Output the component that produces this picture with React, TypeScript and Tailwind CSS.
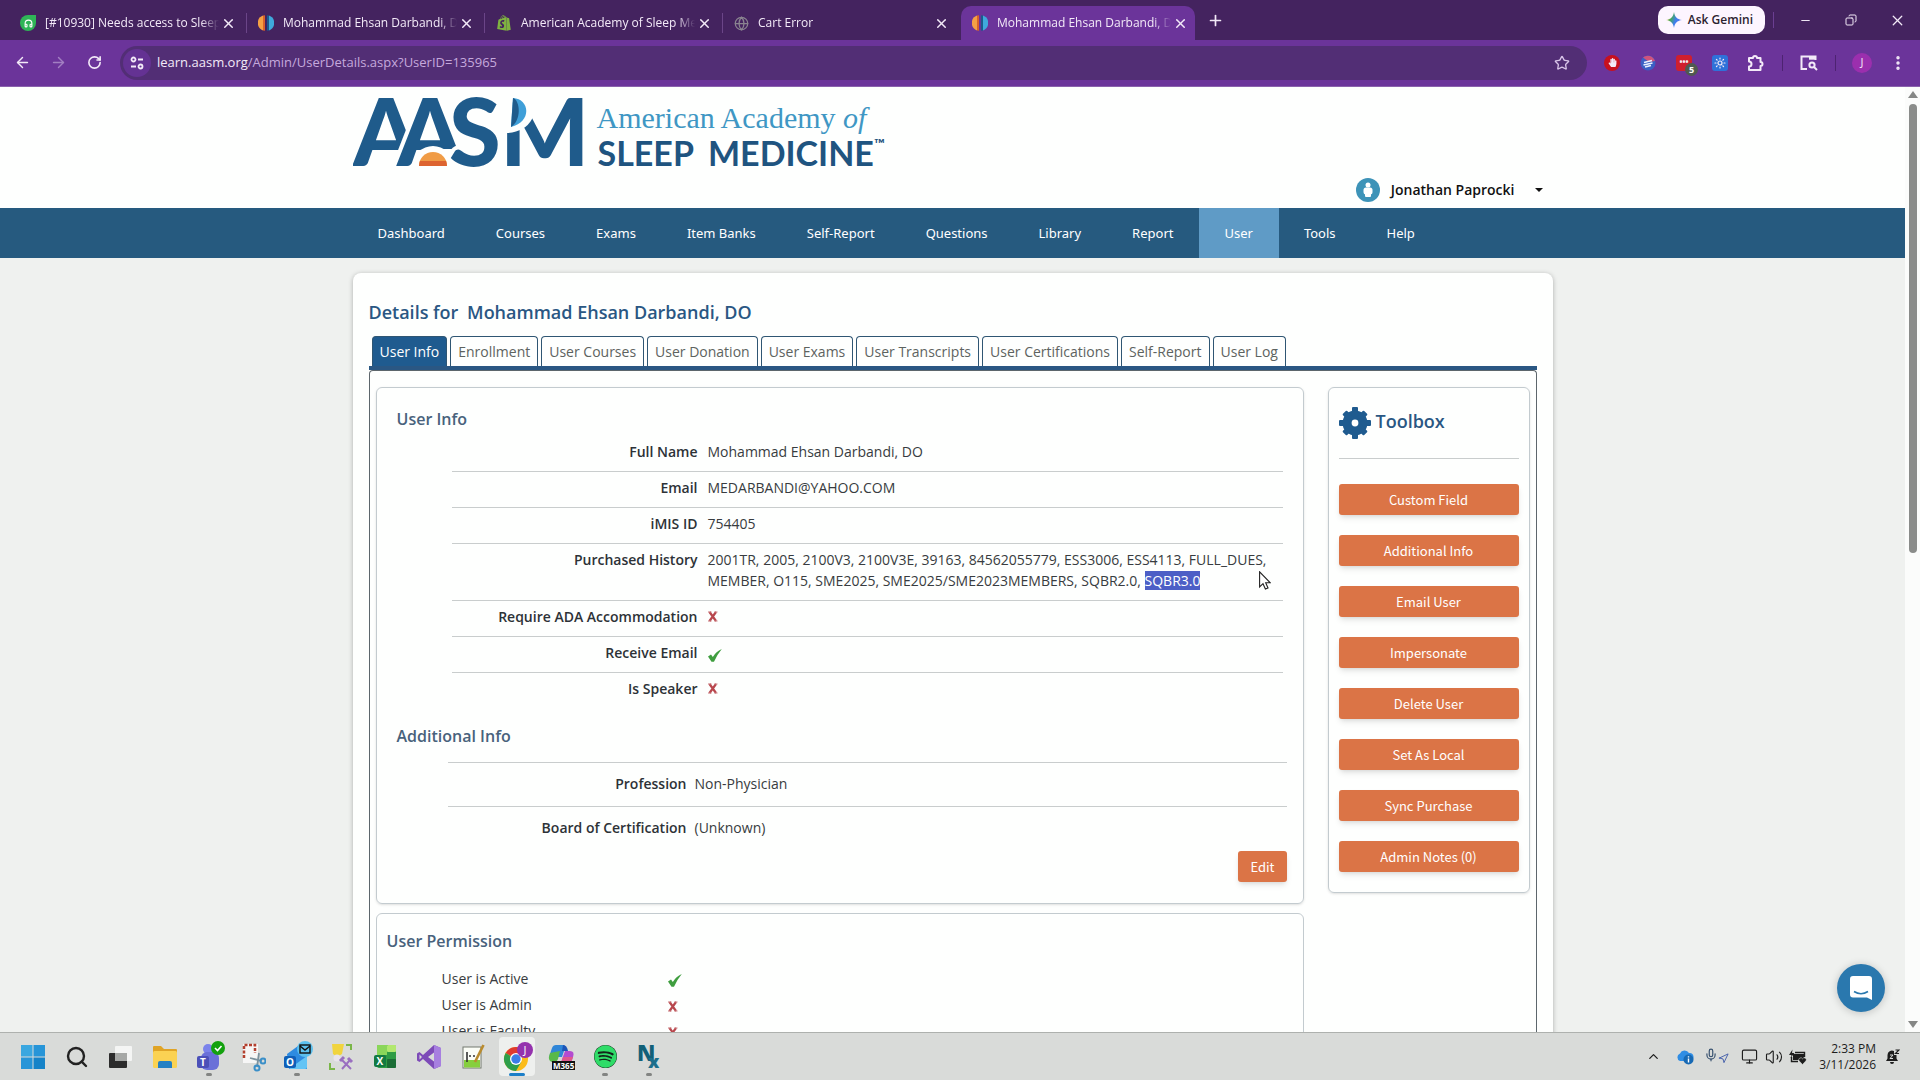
import React from "react";
import {
    ArrowLeft,
    ArrowRight,
    ChevronUp,
    Copy,
    EllipsisVertical,
    Globe,
    Headphones,
    Mic,
    Minus,
    Monitor,
    Navigation,
    Plus,
    RotateCw,
    Search,
    Star,
    Sun,
    Volume2,
    X,
} from "lucide-react";
import { FaHandPaper, FaShopify, FaSpotify } from "react-icons/fa";
import clsx from "clsx";

const browserTabs = [
    { title: "[#10930] Needs access to Sleep", icon: "support" },
    { title: "Mohammad Ehsan Darbandi, DO", icon: "aasm" },
    { title: "American Academy of Sleep Medicine", icon: "shop" },
    { title: "Cart Error", icon: "globe" },
    { title: "Mohammad Ehsan Darbandi, DO", icon: "aasm", active: true },
];

const navItems = [
    "Dashboard",
    "Courses",
    "Exams",
    "Item Banks",
    "Self-Report",
    "Questions",
    "Library",
    "Report",
    "User",
    "Tools",
    "Help",
];

const detailTabs = [
    "User Info",
    "Enrollment",
    "User Courses",
    "User Donation",
    "User Exams",
    "User Transcripts",
    "User Certifications",
    "Self-Report",
    "User Log",
];

const tools = [
    "Custom Field",
    "Additional Info",
    "Email User",
    "Impersonate",
    "Delete User",
    "Set As Local",
    "Sync Purchase",
    "Admin Notes (0)",
];

const permissions = [
    { name: "User is Active", on: true },
    { name: "User is Admin", on: false },
    { name: "User is Faculty", on: false },
];

function Favicon({ icon }: { icon: string }) {
    if (icon === "support")
        return (
            <span className="grid size-4 shrink-0 place-items-center rounded-full rounded-tr-sm bg-[#2fb457] text-white">
                <Headphones size={9} strokeWidth={3} />
            </span>
        );
    if (icon === "shop") return <FaShopify size={16} className="shrink-0 text-[#7fb241]" />;
    if (icon === "globe") return <Globe size={15} className="shrink-0 text-[#8a8490]" />;
    return (
        <svg viewBox="0 0 16 16" className="size-4 shrink-0">
            <path d="M5 0.5 A8 8 0 0 0 5 15.5 Z" fill="#f5a044" />
            <path d="M5 0.5 L7 0.2 V15.8 L5 15.5 Z" fill="#d9622b" />
            <path d="M9 0.2 L11 0.5 V15.5 L9 15.8 Z" fill="#1c5a8c" />
            <path d="M11 0.5 A8 8 0 0 1 11 15.5 Z" fill="#3fa9dc" />
        </svg>
    );
}

function TabStrip() {
    return (
        <div className="flex h-10 items-end bg-[#44235f] pl-[9px] text-[#f3eaf8]">
            {browserTabs.map((tab, index) => (
                <div
                    key={index}
                    className={clsx(
                        "flex h-[34px] items-center pl-[11px]",
                        tab.active ? "w-[234px] rounded-t-[10px] bg-[#6b349a]" : "w-[238px]"
                    )}>
                    <Favicon icon={tab.icon} />
                    <span className="ml-[9px] w-[174px] overflow-hidden text-[12px] whitespace-nowrap [mask-image:linear-gradient(to_right,black_156px,transparent_174px)]">
                        {tab.title}
                    </span>
                    <button aria-label="Close tab" className="grid w-[18px] place-items-center">
                        <X size={15} strokeWidth={2.4} />
                    </button>
                    {!tab.active && index < 3 && <span className="ml-auto h-5 w-px shrink-0 bg-[#6b4588]" />}
                </div>
            ))}
            <button aria-label="New tab" className="mb-[11px] ml-3">
                <Plus size={17} strokeWidth={2.4} />
            </button>
            <div className="ml-auto flex h-10 items-center">
                <button className="flex h-7 items-center gap-[6px] rounded-[10px] bg-[#fdf5ff] pr-3 pl-2 text-[12px] font-semibold text-[#2b2330]">
                    <svg viewBox="0 0 16 16" className="size-4">
                        <defs>
                            <linearGradient id="gem" x1="0" y1="0.3" x2="1" y2="0.7">
                                <stop offset="0" stopColor="#f6b93b" />
                                <stop offset="0.3" stopColor="#45a85c" />
                                <stop offset="0.6" stopColor="#3f7df0" />
                                <stop offset="1" stopColor="#5b79e6" />
                            </linearGradient>
                        </defs>
                        <path d="M8 0 C8.8 5 11 7.2 16 8 C11 8.8 8.8 11 8 16 C7.2 11 5 8.8 0 8 C5 7.2 7.2 5 8 0Z" fill="url(#gem)" />
                    </svg>
                    Ask Gemini
                </button>
                <span className="ml-2 h-4 w-px bg-[#6b3f92]" />
                <button aria-label="Minimize" className="ml-2 grid w-[46px] place-items-center">
                    <Minus size={13} strokeWidth={1.8} />
                </button>
                <button aria-label="Restore" className="grid w-[46px] place-items-center">
                    <Copy size={12} strokeWidth={2} className="-scale-x-100" />
                </button>
                <button aria-label="Close" className="grid w-[46px] place-items-center">
                    <X size={17} strokeWidth={1.8} />
                </button>
            </div>
        </div>
    );
}

function Toolbar() {
    return (
        <div className="flex h-[47px] items-center border-b border-[#8a62ac] bg-[#6b349a] pb-px pl-1 text-[#f3eaf8]">
            <button aria-label="Back" className="grid w-9 place-items-center">
                <ArrowLeft size={17} />
            </button>
            <button aria-label="Forward" className="grid w-9 place-items-center text-[#a27fc2]">
                <ArrowRight size={17} />
            </button>
            <button aria-label="Reload" className="grid w-9 place-items-center">
                <RotateCw size={15} strokeWidth={2.6} />
            </button>
            <div className="ml-2 flex h-[34px] flex-1 items-center rounded-full bg-[#522e75] pr-[17px] pl-[3px]">
                <button aria-label="Site information" className="grid size-7 place-items-center rounded-full bg-[#643293]">
                    <svg viewBox="0 0 14 14" fill="none" stroke="currentColor" strokeWidth="1.8" className="size-[14px]">
                        <circle cx="3.5" cy="3.5" r="2" />
                        <path d="M8 3.5 H13 M1 10.5 H6" />
                        <circle cx="10.5" cy="10.5" r="2" />
                    </svg>
                </button>
                <span className="ml-[6px] text-[13px]">
                    learn.aasm.org
                    <span className="text-[#c5a9dc]">/Admin/UserDetails.aspx?UserID=135965</span>
                </span>
                <button aria-label="Bookmark" className="ml-auto">
                    <Star size={16} className="text-[#d8c4e8]" />
                </button>
            </div>
            <div className="ml-[7px] flex items-center">
                <button aria-label="Ad blocker" className="grid w-9 place-items-center">
                    <span className="grid size-4 place-items-center rounded-full bg-[#c8101e]">
                        <FaHandPaper size={9} />
                    </span>
                </button>
                <button aria-label="Translate" className="grid w-9 place-items-center">
                    <svg viewBox="0 0 16 16" className="size-4">
                        <circle cx="8" cy="8" r="7.5" fill="#3b5fc4" />
                        <path d="M3 2.5 A7.5 7.5 0 0 1 15 6 L9 7 Z" fill="#d0527c" />
                        <path d="M4 7.5 L12 5.5 M3.5 10 L12.5 8 M5 12 L11 10.5" stroke="#e9f1ff" strokeWidth="1.6" />
                    </svg>
                </button>
                <button aria-label="Passwords" className="relative grid w-9 place-items-center">
                    <span className="size-4 rounded-[3px] bg-[#cf1f2e] text-center text-[8px] leading-[14px] font-bold">•••</span>
                    <span className="absolute top-[8px] left-[19px] grid h-[13px] w-[13px] place-items-center rounded-full bg-[#4f5a50] text-[9px] leading-none font-bold text-white">
                        5
                    </span>
                </button>
                <button aria-label="Assistant" className="grid w-9 place-items-center">
                    <span className="grid size-4 place-items-center rounded-[3px] bg-[#2f72d9]">
                        <Sun size={12} strokeWidth={2.4} />
                    </span>
                </button>
                <button aria-label="Extensions" className="grid w-9 place-items-center">
                    <svg viewBox="0 0 18 18" fill="none" stroke="currentColor" strokeWidth="2" strokeLinejoin="round" className="size-[18px]">
                        <path d="M2 4 H6 A2 2 0 0 1 10 4 H13.5 V8 A2 2 0 0 1 13.5 12 V16 H2 V12.5 A2.5 2.5 0 0 0 2 7.5Z" />
                    </svg>
                </button>
                <span className="mx-2 h-4 w-px bg-[#4d2371]" />
                <button aria-label="Search tabs" className="grid w-9 place-items-center">
                    <svg viewBox="0 0 18 16" fill="none" stroke="currentColor" strokeWidth="2" className="h-4 w-[18px]">
                        <path d="M7 14 H1.5 V1.5 H15.5 V5" />
                        <path d="M9 3 H16" strokeWidth="3.4" />
                        <circle cx="12" cy="10" r="2.6" />
                        <path d="M14 12 L17 15" />
                    </svg>
                </button>
                <span className="mx-2 h-4 w-px bg-[#4d2371]" />
                <button aria-label="Profile" className="grid w-9 place-items-center">
                    <span className="grid size-5 place-items-center rounded-full bg-[#9b2fae] text-[11px]">J</span>
                </button>
                <button aria-label="Menu" className="grid w-9 place-items-center">
                    <EllipsisVertical size={18} strokeWidth={2.6} />
                </button>
            </div>
            <span className="w-1" />
        </div>
    );
}

function Logo() {
    return (
        <a href="#home" aria-label="American Academy of Sleep Medicine" className="flex">
            <svg viewBox="0 0 244 74" className="h-[74px] w-[244px] font-['Lato',sans-serif]">
                <g
                    fill="#1f5b8b"
                    stroke="#fefffe"
                    strokeWidth="8"
                    strokeLinejoin="round"
                    fontSize="94"
                    fontWeight="900"
                    style={{ paintOrder: "stroke" }}>
                    <text x="0" y="70">A</text>
                    <text x="44" y="70">A</text>
                    <circle cx="80" cy="70" r="20" fill="#fefffe" stroke="none" />
                    <rect x="82" y="53" width="30" height="20" fill="#fefffe" stroke="none" />
                    <text x="96" y="70">S</text>
                    <text x="147" y="70">M</text>
                </g>
                <path d="M66 70 A14 14 0 0 1 94 70 Z" fill="#f09c46" />
                <path d="M66 70 A14 14 0 0 1 67 65 H93 A14 14 0 0 1 94 70 Z" fill="#dd6430" />
                <path d="M154 0 H188 L179 23 Q172 36 154 37 Z" fill="#fefffe" />
                <path d="M160 2 C177 3 179 26 158 31 Z" fill="#3f9fd8" />
                <path d="M160 2 C167 4 169 24 158 31 Z" fill="#1f5b8b" />
            </svg>
            <div className="pt-[6px] whitespace-nowrap">
                <div className="font-['Liberation_Serif',serif] text-[30px] leading-[32px] text-[#3f97c4]">
                    American Academy <i>of</i>
                </div>
                <div className="flex font-['Lato',sans-serif] text-[34px] leading-[38px] font-bold text-[#1f5480]">
                    <span className="mr-[14px] ml-px">SLEEP</span>
                    <span>MEDICINE</span>
                    <span className="text-[14px] leading-[20px]">™</span>
                </div>
            </div>
        </a>
    );
}

function SiteHeader() {
    return (
        <header>
            <div className="bg-[#fefffe]">
                <div className="mx-auto flex max-w-[1200px] justify-between pt-[9px]">
                    <div className="pb-[36px]">
                        <Logo />
                    </div>
                    <button className="mr-[10px] mb-[5px] flex items-center self-end text-[14px] leading-[26px] font-semibold text-[#111]">
                        <svg viewBox="0 0 24 24" className="mr-[11px] size-6">
                            <circle cx="12" cy="12" r="12" fill="#3d93b8" />
                            <circle cx="12" cy="7" r="2.5" fill="white" />
                            <rect x="7.5" y="9.5" width="9" height="7" rx="2.5" fill="white" />
                            <rect x="9" y="12" width="6" height="7" rx="1" fill="white" />
                        </svg>
                        Jonathan Paprocki
                        <span className="ml-5 border-x-4 border-t-4 border-x-transparent border-t-[#111]" />
                    </button>
                </div>
            </div>
            <nav className="bg-[#265a7f]">
                <div className="mx-auto flex max-w-[1200px]">
                    {navItems.map((item) => (
                        <a
                            key={item}
                            href="#nav"
                            className={clsx(
                                "pr-[26px] pl-[25px] font-['Noto_Sans',sans-serif] text-[13px] leading-[50px] text-white",
                                item === "User" && "bg-[#5f9bc6]"
                            )}>
                            {item}
                        </a>
                    ))}
                </div>
            </nav>
        </header>
    );
}

function Cross() {
    return (
        <svg viewBox="0 0 10 11" role="img" aria-label="No" className="h-[11px] w-[10px]">
            <path d="M1.5 1 L8 10 M8 1 L1.5 10" stroke="#b8474d" strokeWidth="2.2" />
            <path d="M0 1 H3.5 M6.5 1 H9.5 M0 10 H3.5 M6.5 10 H9.5" stroke="#c9787c" strokeWidth="1.2" />
        </svg>
    );
}

function Tick() {
    return (
        <svg viewBox="0 0 14 13" role="img" aria-label="Yes" className="h-[13px] w-[14px]">
            <path d="M0 7.5 L3 5.5 L4.8 8 Q8 2.5 13.8 0 Q8.5 6.5 6 12.8 L3.5 12.8 Z" fill="#3f9e3f" />
        </svg>
    );
}

function Row({ label, children }: { label: string; children: React.ReactNode }) {
    return (
        <div className="flex gap-[10px] border-b border-[#c9cdcd] pt-[5px] pb-[9px] text-[14px] leading-[21px] last:border-b-0">
            <dt className="w-[246px] shrink-0 text-right font-semibold text-[#2d3237]">{label}</dt>
            <dd className="relative flex-1 text-[#383c40]">{children}</dd>
        </div>
    );
}

function ExtraRow({ label, value }: { label: string; value: string }) {
    return (
        <div className="flex gap-2 border-t border-[#c9cdcd] pt-[10px] pb-3 text-[14px] leading-[21px]">
            <dt className="w-[239px] shrink-0 text-right font-semibold text-[#2d3237]">{label}</dt>
            <dd className="text-[#383c40]">{value}</dd>
        </div>
    );
}

function UserInfo() {
    return (
        <section className="rounded-md border border-[#c3cbcf] pr-4 pb-[21px] pl-5 shadow-sm">
            <h2 className="mt-[17px] mb-[3px] text-[16px] leading-7 font-semibold text-[#48627c]">User Info</h2>
            <dl className="mr-1 ml-[55px]">
                <Row label="Full Name">Mohammad Ehsan Darbandi, DO</Row>
                <Row label="Email">MEDARBANDI@YAHOO.COM</Row>
                <Row label="iMIS ID">754405</Row>
                <Row label="Purchased History">
                    2001TR, 2005, 2100V3, 2100V3E, 39163, 84562055779, ESS3006, ESS4113, FULL_DUES,
                    <br />
                    MEMBER, O115, SME2025, SME2025/SME2023MEMBERS, SQBR2.0,{" "}
                    <mark className="bg-[#4c5fc6] text-white">SQBR3.0</mark>
                    <svg viewBox="0 0 12 19" className="absolute top-[22px] right-3 h-[19px] w-3">
                        <path
                            d="M0.6 0.8 V16 L4 12.7 L6.4 18 L9 16.9 L6.7 11.8 H11.3 Z"
                            fill="white"
                            stroke="#222"
                            strokeWidth="1.1"
                        />
                    </svg>
                </Row>
                <Row label="Require ADA Accommodation">
                    <span className="flex h-[21px] items-center"><Cross /></span>
                </Row>
                <Row label="Receive Email">
                    <span className="flex h-[21px] items-end pb-px"><Tick /></span>
                </Row>
                <Row label="Is Speaker">
                    <span className="flex h-[21px] items-center"><Cross /></span>
                </Row>
            </dl>
            <h2 className="mt-[14px] mb-3 text-[16px] leading-7 font-semibold text-[#48627c]">Additional Info</h2>
            <dl className="ml-[51px]">
                <ExtraRow label="Profession" value="Non-Physician" />
                <ExtraRow label="Board of Certification" value="(Unknown)" />
            </dl>
            <div className="mt-px flex justify-end">
                <button className="rounded-[3px] bg-[#db7446] px-3 font-['Noto_Sans_CJK_SC',sans-serif] text-[13px] leading-[31px] text-white shadow-md">
                    Edit
                </button>
            </div>
        </section>
    );
}

function UserPermission() {
    return (
        <section className="mt-[9px] rounded-t-md border border-[#c3cbcf] px-[10px] pb-10">
            <h2 className="mt-[13px] text-[16px] leading-7 font-semibold text-[#48627c]">User Permission</h2>
            <dl className="mt-[11px] ml-[55px]">
                {permissions.map((item) => (
                    <div key={item.name} className="flex text-[14px] leading-[26px] text-[#383c40]">
                        <dt className="w-[226px]">{item.name}</dt>
                        <dd className="flex items-center pt-[2px]">{item.on ? <Tick /> : <Cross />}</dd>
                    </div>
                ))}
            </dl>
        </section>
    );
}

function Toolbox() {
    return (
        <aside className="w-[202px] self-start rounded-md border border-[#c3cbcf] px-[10px] pb-5 shadow-sm">
            <h2 className="flex items-center gap-[5px] border-b border-[#c9cdcd] pt-[19px] pb-[19px] text-[18px] leading-7 font-semibold text-[#2a5783]">
                <svg viewBox="0 0 32 32" className="size-8">
                    <g fill="#1f5b8f">
                        <circle cx="16" cy="16" r="12.5" />
                        <rect x="13" y="0" width="6" height="32" rx="1" />
                        <rect x="0" y="13" width="32" height="6" rx="1" />
                        <rect x="13" y="1" width="6" height="30" rx="1" transform="rotate(45 16 16)" />
                        <rect x="13" y="1" width="6" height="30" rx="1" transform="rotate(-45 16 16)" />
                    </g>
                    <circle cx="16" cy="16" r="3.4" fill="white" />
                </svg>
                <span className="pb-1">Toolbox</span>
            </h2>
            <div className="mt-[25px] grid gap-5">
                {tools.map((tool) => (
                    <button
                        key={tool}
                        className="w-full rounded-[3px] bg-[#db7446] font-['Noto_Sans_CJK_SC',sans-serif] text-[13px] leading-[31px] text-white shadow-md">
                        {tool}
                    </button>
                ))}
            </div>
        </aside>
    );
}

function UserDetails() {
    return (
        <main className="mx-auto mt-[15px] max-w-[1200px] rounded-lg bg-[#fefffe] px-4 shadow-[0_1px_5px_rgba(0,0,0,0.28)]">
            <h1 className="pt-[25px] text-[18px] leading-7 font-semibold text-[#2a5783]">
                Details for <span className="ml-1">Mohammad Ehsan Darbandi, DO</span>
            </h1>
            <div className="mt-[10px] flex gap-[3px] border-b-4 border-[#2a5783] pl-[3px]">
                {detailTabs.map((tab, index) => (
                    <button
                        key={tab}
                        className={clsx(
                            "rounded-t-[4px] border border-b-0 border-[#2f5673] px-[7px] text-[14px] leading-[29px]",
                            index === 0 ? "bg-[#1f5b8f] text-white" : "text-[#5d635f]"
                        )}>
                        {tab}
                    </button>
                ))}
            </div>
            <div className="flex gap-6 rounded-t-[4px] border border-b-0 border-[#5d666c] px-[6px] pt-4">
                <div className="flex-1">
                    <UserInfo />
                    <UserPermission />
                </div>
                <Toolbox />
            </div>
        </main>
    );
}

function TeamsIcon() {
    return (
        <svg viewBox="0 0 32 32" className="size-8">
            <circle cx="15" cy="8" r="5" fill="#7b83eb" />
            <rect x="8" y="11" width="18" height="18" rx="6" fill="#6a70d8" />
            <rect x="4" y="15" width="12" height="12" rx="2" fill="#4b50b8" />
            <text x="7" y="25" fontSize="10" fontWeight="700" fill="white">T</text>
            <circle cx="25" cy="7" r="7" fill="#13a10e" />
            <path d="M22 7 L24.5 9.5 L28.5 5" stroke="white" strokeWidth="1.6" fill="none" />
        </svg>
    );
}

const taskbarApps: { name: string; running?: boolean; active?: boolean; icon: React.ReactNode }[] = [
    {
        name: "Start",
        icon: (
            <svg viewBox="0 0 24 24" className="size-6" fill="#1683c8">
                <path d="M0 0H11.5V11.5H0Z" fill="#3aa7e0" />
                <path d="M12.5 0H24V11.5H12.5ZM0 12.5H11.5V24H0Z" fill="#2795d8" />
                <path d="M12.5 12.5H24V24H12.5Z" />
            </svg>
        ),
    },
    { name: "Search", icon: <Search size={24} strokeWidth={2.4} className="text-[#222]" /> },
    {
        name: "Task view",
        icon: (
            <svg viewBox="0 0 24 24" className="size-6">
                <rect x="6" y="1" width="17" height="15" rx="1" fill="#f4f5f4" />
                <rect x="0" y="8" width="18" height="15" rx="1" fill="#2c2c2c" />
                <rect x="6" y="8" width="12" height="8" fill="#a6a8a6" />
            </svg>
        ),
    },
    {
        name: "File Explorer",
        icon: (
            <svg viewBox="0 0 26 24" className="h-6 w-[26px]">
                <path d="M1 2 Q1 1 2 1 H9 L12 4 H24 Q25 4 25 5 V22 H1Z" fill="#e0a426" />
                <rect x="1" y="6" width="24" height="17" rx="1.5" fill="#fbd253" />
                <path d="M6 23 V18 Q6 16 8 16 H18 Q20 16 20 18 V23Z" fill="#2581c4" />
            </svg>
        ),
    },
    { name: "Teams", running: true, icon: <TeamsIcon /> },
    {
        name: "Snipping Tool",
        icon: (
            <svg viewBox="0 0 26 32" className="h-8 w-[26px]">
                <rect x="3" y="3" width="15" height="19" fill="#f6f6f6" />
                <path d="M4 17 V4 H15 V12" fill="none" stroke="#b3402f" strokeWidth="2.5" strokeDasharray="3 1.5" />
                <path d="M10 17 L22 20 M17 26 L19 12" stroke="#7d929e" strokeWidth="1.8" />
                <circle cx="23" cy="20" r="2.5" fill="none" stroke="#3a8fc8" strokeWidth="2" />
                <circle cx="17" cy="27" r="2.5" fill="none" stroke="#3a8fc8" strokeWidth="2" />
            </svg>
        ),
    },
    {
        name: "Outlook",
        running: true,
        icon: (
            <svg viewBox="0 0 32 32" className="size-8">
                <path d="M6 13 L17 5 L26 13 V28 H8Z" fill="#2e8be0" />
                <path d="M8 28 L26 15 V26 Q26 28 24 28Z" fill="#64c4f5" />
                <rect x="3" y="15" width="12" height="12" rx="2" fill="#0f5fb8" />
                <text x="5" y="25" fontSize="10" fontWeight="700" fill="white">O</text>
                <circle cx="24" cy="8" r="8" fill="#5cc0ee" />
                <rect x="19" y="4" width="10" height="8" fill="none" stroke="#111" strokeWidth="1.4" />
                <path d="M19 5 L24 9 L29 5" fill="none" stroke="#111" strokeWidth="1.4" />
            </svg>
        ),
    },
    {
        name: "Config Tools",
        icon: (
            <svg viewBox="0 0 26 32" className="h-8 w-[26px]">
                <path d="M4 3 H16 L14 13 Q9 17 5 13Z" fill="#f1d43f" />
                <path d="M18 4 H23 V9 M2 22 V28 H7" stroke="#7ab648" strokeWidth="2" fill="none" />
                <circle cx="9" cy="17" r="3.5" fill="#e9e4ec" />
                <path d="M14 19 L23 28 M22 19 L14 28" stroke="#9a6fc0" strokeWidth="2" />
                <path d="M12 20 L16 16 M20 17 L24 21" stroke="#9a6fc0" strokeWidth="3" />
            </svg>
        ),
    },
    {
        name: "Excel",
        icon: (
            <svg viewBox="0 0 24 26" className="h-[26px] w-6">
                <rect x="4" y="1" width="19" height="23" rx="2" fill="#2f9c45" />
                <rect x="4" y="1" width="10" height="10" fill="#8ad65a" />
                <rect x="14" y="1" width="9" height="7" rx="1" fill="#b2e86f" />
                <rect x="14" y="15" width="9" height="9" rx="1" fill="#1b6d36" />
                <rect x="1" y="11" width="12" height="12" rx="2" fill="#137a42" />
                <text x="3.5" y="21" fontSize="10" fontWeight="700" fill="white">X</text>
            </svg>
        ),
    },
    {
        name: "Visual Studio",
        icon: (
            <svg viewBox="0 0 24 24" className="size-6">
                <path
                    d="M17 0 L24 3 V21 L17 24 L6 14 L2.5 17 L0 15.5 V8.5 L2.5 7 L6 10Z M17 7.5 L11 12 L17 16.5Z M2.5 9.5 V14.5 L5 12Z"
                    fill="#7d4bb8"
                    fillRule="evenodd"
                />
                <path d="M17 0 L24 3 V21 L17 24Z" fill="#a77fe0" />
            </svg>
        ),
    },
    {
        name: "Notepad++",
        icon: (
            <svg viewBox="0 0 24 26" className="h-[26px] w-6">
                <rect x="2" y="3" width="18" height="21" fill="#fbfdf6" stroke="#747a70" />
                <rect x="3" y="16" width="16" height="7.5" fill="#86cf3e" />
                <path d="M6 8 V18 M8 12 H10 M12 12 H14" stroke="#333" strokeWidth="1.6" />
                <path d="M22.5 1 L14 18" stroke="#b98b2e" strokeWidth="2.6" />
            </svg>
        ),
    },
    {
        name: "Chrome",
        active: true,
        icon: (
            <svg viewBox="0 0 32 32" className="size-8">
                <circle cx="15" cy="18" r="12" fill="#fbbc1a" />
                <path d="M15 18 L4.6 12 A12 12 0 0 1 25.4 12 Z" fill="#df3a2f" />
                <path d="M15 18 L4.6 12 A12 12 0 0 0 15 30 L20.2 21 Z" fill="#2e9f4b" />
                <circle cx="15" cy="18" r="6" fill="white" />
                <circle cx="15" cy="18" r="4.7" fill="#3b7de8" />
                <circle cx="24" cy="9" r="8" fill="#9432ad" />
                <text x="22.5" y="13" fontSize="11" fill="white">J</text>
            </svg>
        ),
    },
    {
        name: "Microsoft 365",
        icon: (
            <svg viewBox="0 0 28 28" className="size-7">
                <path d="M9 2 H16 Q19 2 18 5 L15 14 H3 Q2 14 3 11 L5 5 Q6 2 9 2Z" fill="#2f86d8" />
                <path d="M3 10 L13 8 L11 16 Q9 20 5 19 Q0 18 3 10Z" fill="#58b94a" />
                <path d="M16 2 Q20 2 21 8 H15Z" fill="#1c55b8" />
                <path d="M18 8 H23 Q28 8 26 14 L24 20 Q23 22 20 22 H13 Z" fill="#b44bd0" />
                <path d="M16 14 H26 L24 20 H14Z" fill="#e0588c" />
                <rect x="5" y="18" width="23" height="9" fill="#111" />
                <text x="6" y="25.5" fontSize="8" fontWeight="700" fill="white">M365</text>
            </svg>
        ),
    },
    {
        name: "Spotify",
        running: true,
        icon: (
            <span className="block rounded-full bg-[#14251a]">
                <FaSpotify size={23} className="text-[#2fdc68]" />
            </span>
        ),
    },
    {
        name: "Nx",
        running: true,
        icon: (
            <svg viewBox="0 0 24 26" className="h-[26px] w-6">
                <text x="0" y="17" fontSize="22" fontWeight="800" fill="#116078">N</text>
                <text x="11" y="24" fontSize="18" fontWeight="800" fill="#1c6f8c">x</text>
            </svg>
        ),
    },
];

function Tray() {
    return (
        <div className="ml-auto flex items-center pr-5">
            <ChevronUp size={15} />
            <svg viewBox="0 0 18 16" className="ml-[15px] h-4 w-[18px]">
                <path d="M4 12 A4 4 0 0 1 4 4.5 A5 5 0 0 1 13 4 A4 4 0 0 1 14 12Z" fill="#2f8de4" />
                <circle cx="12.5" cy="10.5" r="5" fill="#1769b4" />
                <path d="M12.5 9.5 V13.5 M12.5 7.2 V8.5" stroke="white" strokeWidth="1.4" />
            </svg>
            <span className="ml-[10px] flex items-center text-[#36506e]">
                <Mic size={14} className="mb-1" />
                <Navigation size={11} className="mt-1 text-[#3f5ba8]" />
            </span>
            <Monitor size={17} strokeWidth={1.6} className="ml-3" />
            <Volume2 size={18} strokeWidth={1.5} className="ml-[7px]" />
            <svg viewBox="0 0 18 16" className="ml-[6px] h-4 w-[18px]">
                <path d="M4 5 H15 V11 H4Z" fill="#1d1d1d" />
                <path d="M6 3.5 H15.5 V8 M2.5 8 V12.5 H9" fill="none" stroke="#1d1d1d" strokeWidth="1.4" />
                <path d="M3.5 0.5 L0 6 H2.5 L1.5 9 L5.5 4 H3Z" fill="#1d1d1d" />
                <path d="M13.5 15.5 L10 11.8 A2 2 0 0 1 13.5 9.8 A2 2 0 0 1 17 11.8Z" fill="#1d1d1d" stroke="#d9dbd9" strokeWidth="0.6" />
            </svg>
            <div className="ml-3 text-right text-[12px] leading-4">
                2:33 PM
                <br />
                3/11/2026
            </div>
            <svg viewBox="0 0 15 16" className="ml-[9px] h-4 w-[15px]">
                <path d="M1 12 L2.5 9.5 V6 A4.5 4.5 0 0 1 9 2 V6 H11.5 V9.5 L13 12Z M5 13 H9 A2 2 0 0 1 5 13Z" fill="#1d1d1d" />
                <path d="M5 6 H8 L5 9.5 H8" fill="none" stroke="#d9dbd9" strokeWidth="1" />
                <path d="M10.5 1 H14 L10.5 4.5 H14" fill="none" stroke="#1d1d1d" strokeWidth="1.2" />
            </svg>
        </div>
    );
}

function Taskbar() {
    return (
        <footer className="flex h-12 shrink-0 items-center border-t border-[#aeb1ae] bg-[#d9dbd9] pl-[11px] text-[#1d1d1d]">
            {taskbarApps.map((app) => (
                <button
                    key={app.name}
                    aria-label={app.name}
                    className="relative grid h-[47px] w-11 place-items-center">
                    {app.active && <span className="absolute inset-x-1 inset-y-1 rounded bg-[#eef0ee]" />}
                    <span className="relative">{app.icon}</span>
                    {app.active && <span className="absolute bottom-1 h-[3px] w-4 rounded-full bg-[#1c7fc8]" />}
                    {app.running && <span className="absolute bottom-1 h-[3px] w-[6px] rounded-full bg-[#828482]" />}
                </button>
            ))}
            <Tray />
        </footer>
    );
}

function App() {
    return (
        <div className="flex h-screen flex-col overflow-hidden font-['Open_Sans','Noto_Sans',sans-serif]">
            <TabStrip />
            <Toolbar />
            <div className="relative flex min-h-0 flex-1">
                <div className="flex-1 overflow-hidden bg-[#eff1ef]">
                    <SiteHeader />
                    <UserDetails />
                </div>
                <div className="flex w-[15px] flex-col items-center justify-between bg-[#fbfcfb] pt-1 pb-1">
                    <span className="border-x-[5px] border-b-[7px] border-x-transparent border-b-[#858785]" />
                    <span className="mt-[6px] h-[449px] w-2 rounded-full bg-[#8a8c8a]" />
                    <span className="mt-auto border-x-[5px] border-t-[7px] border-x-transparent border-t-[#858785]" />
                </div>
                <button
                    aria-label="Open chat"
                    className="absolute right-[35px] bottom-5 grid size-12 place-items-center rounded-full bg-[#2a78ae] shadow-[0_1px_8px_rgba(0,0,0,0.2)]">
                    <svg viewBox="0 0 22 24" className="h-6 w-[22px]">
                        <path d="M3 0 H19 Q22 0 22 3 V24 L17 21.5 H3 Q0 21.5 0 18.5 V3 Q0 0 3 0Z" fill="white" />
                        <path d="M4 15.5 Q11 20 18 15.5" stroke="#2a78ae" strokeWidth="1.5" fill="none" />
                    </svg>
                </button>
            </div>
            <Taskbar />
        </div>
    );
}

export default App;
